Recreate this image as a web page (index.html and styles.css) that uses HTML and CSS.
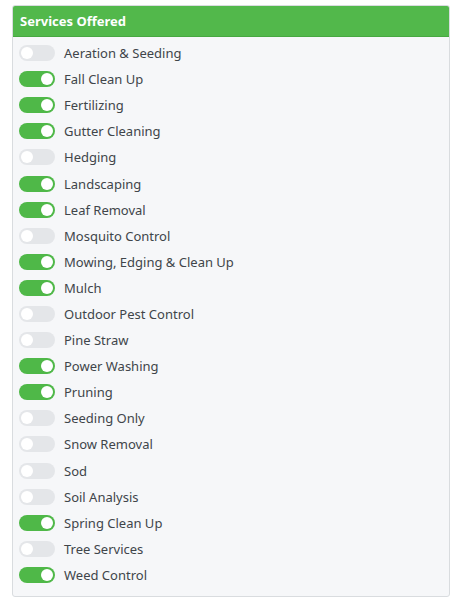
FILE: index.html
```html
<!DOCTYPE html>
<html>
<head>
<meta charset="utf-8">
<link rel="stylesheet" href="styles.css">
</head>
<body>
<div class="card">
  <div class="card-header">Services Offered</div>
  <ul class="list">
    <li class="item"><span class="toggle"></span>Aeration &amp; Seeding</li>
    <li class="item"><span class="toggle on"></span>Fall Clean Up</li>
    <li class="item"><span class="toggle on"></span>Fertilizing</li>
    <li class="item"><span class="toggle on"></span>Gutter Cleaning</li>
    <li class="item"><span class="toggle"></span>Hedging</li>
    <li class="item"><span class="toggle on"></span>Landscaping</li>
    <li class="item"><span class="toggle on"></span>Leaf Removal</li>
    <li class="item"><span class="toggle"></span>Mosquito Control</li>
    <li class="item"><span class="toggle on"></span>Mowing, Edging &amp; Clean Up</li>
    <li class="item"><span class="toggle on"></span>Mulch</li>
    <li class="item"><span class="toggle"></span>Outdoor Pest Control</li>
    <li class="item"><span class="toggle"></span>Pine Straw</li>
    <li class="item"><span class="toggle on"></span>Power Washing</li>
    <li class="item"><span class="toggle on"></span>Pruning</li>
    <li class="item"><span class="toggle"></span>Seeding Only</li>
    <li class="item"><span class="toggle"></span>Snow Removal</li>
    <li class="item"><span class="toggle"></span>Sod</li>
    <li class="item"><span class="toggle"></span>Soil Analysis</li>
    <li class="item"><span class="toggle on"></span>Spring Clean Up</li>
    <li class="item"><span class="toggle"></span>Tree Services</li>
    <li class="item"><span class="toggle on"></span>Weed Control</li>
  </ul>
</div>
</body>
</html>
```
FILE: styles.css
```css
html, body {
  margin: 0;
  padding: 0;
  background: #ffffff;
}
body {
  padding: 5px 8px 0 12px;
  font-family: "Noto Sans", "DejaVu Sans", sans-serif;
}
.card {
  width: 438px;
  height: 592px;
  box-sizing: border-box;
  border: 1px solid #d9dcdf;
  border-radius: 3px;
  background: #f6f7f9;
  overflow: hidden;
}
.card-header {
  height: 31px;
  box-sizing: border-box;
  background: #52b84b;
  border-bottom: 1px solid #47a841;
  color: #ffffff;
  font-weight: 700;
  font-size: 13px;
  line-height: 30px;
  padding-left: 7px;
}
.list {
  list-style: none;
  margin: 0;
  padding: 3px 0 0 6px;
}
.item {
  display: flex;
  align-items: center;
  height: 26.1px;
  font-size: 13px;
  color: #40454a;
}
.toggle {
  position: relative;
  width: 36px;
  height: 16px;
  border-radius: 8px;
  background: #e4e6e9;
  margin-right: 9px;
  flex: none;
}
.toggle::after {
  content: "";
  position: absolute;
  top: 2px;
  left: 2px;
  width: 12px;
  height: 12px;
  border-radius: 50%;
  background: #ffffff;
}
.toggle.on {
  background: #4fb848;
}
.toggle.on::after {
  left: 22px;
}
```
